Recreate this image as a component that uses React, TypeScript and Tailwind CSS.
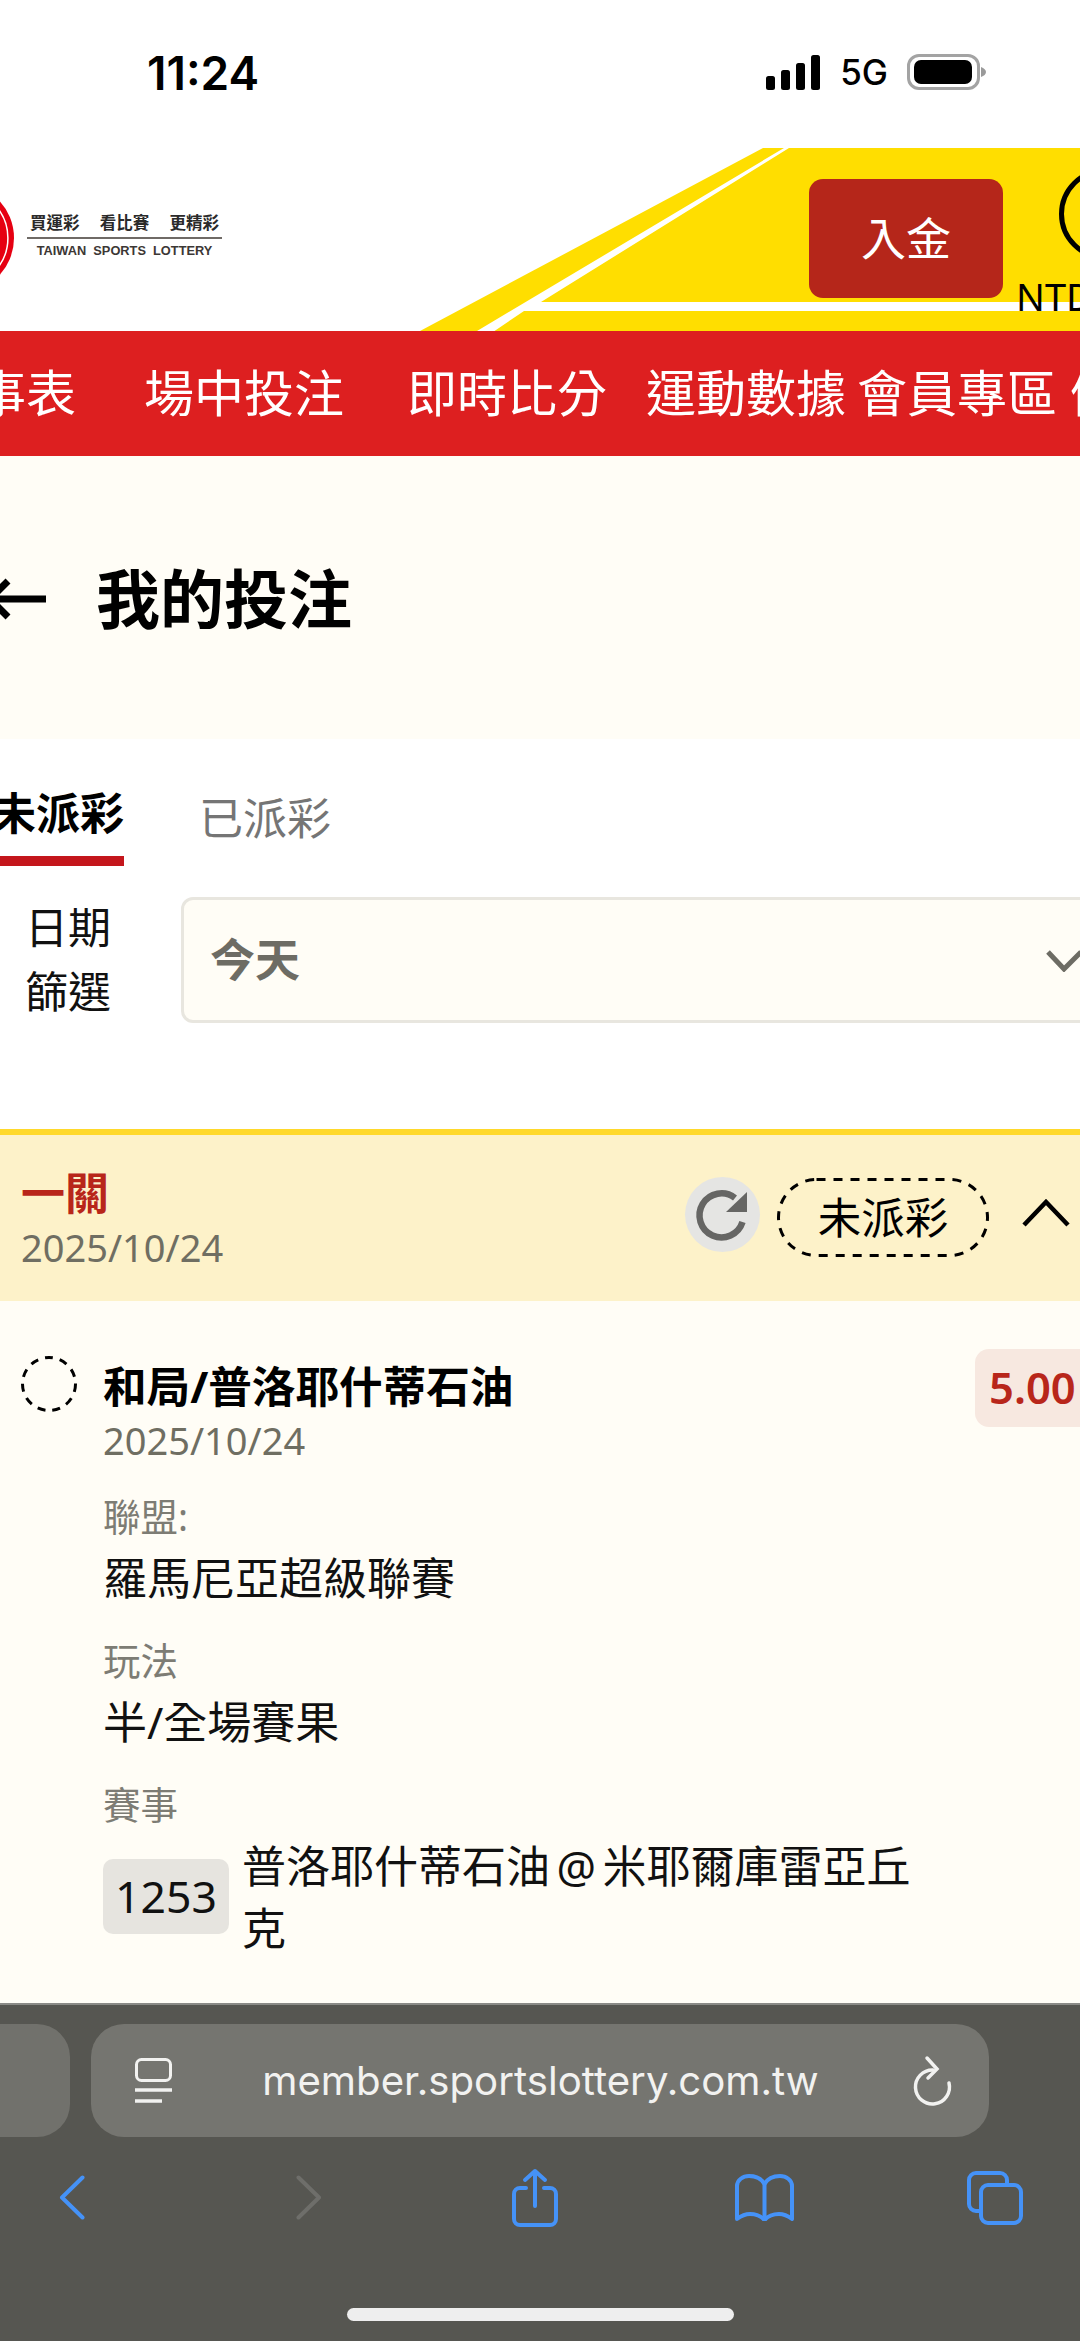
const cjk = "font-['Noto_Sans','Noto_Sans_CJK_TC',sans-serif]"

function SignalBars() {
  return (
    <svg width="54" height="35" viewBox="0 0 54 35" fill="#000">
      <rect x="0" y="21" width="9" height="14" rx="2.5" />
      <rect x="15" y="15" width="9" height="20" rx="2.5" />
      <rect x="30" y="8" width="9" height="27" rx="2.5" />
      <rect x="45" y="0" width="9" height="35" rx="2.5" />
    </svg>
  )
}

function Battery() {
  return (
    <svg width="79" height="36" viewBox="0 0 79 36">
      <rect x="1.5" y="1.5" width="70" height="33" rx="10.5" fill="none" stroke="#a3a3a3" strokeWidth="3" />
      <rect x="7" y="6" width="58" height="24" rx="7" fill="#000" />
      <path d="M74 13c3 1 5 3 5 5s-2 4-5 5z" fill="#9a9a9a" />
    </svg>
  )
}

function StatusBar() {
  return (
    <div className="h-[148px] bg-white flex items-start justify-between pl-[147px] pr-[94px] pt-[49px]">
      <span className="font-['Inter',sans-serif] text-[46px] leading-[48px] font-semibold text-black">11:24</span>
      <div className="flex items-center pt-[5px]">
        <SignalBars />
        <span className="font-['Inter',sans-serif] text-[35px] leading-[36px] font-medium text-black ml-[20px] mr-[19px]">5G</span>
        <Battery />
      </div>
    </div>
  )
}

function Banner() {
  return (
    <svg className="absolute inset-0" width="1080" height="183" viewBox="0 0 1080 183">
      <polygon points="420,183 763,0 1080,0 1080,183" fill="#ffde00" />
      <polygon points="477,183 784,0 789,0 541,154 1080,154 1080,163 524,163 494.5,183" fill="#fff" />
    </svg>
  )
}

function Logo() {
  return (
    <div className="flex items-center w-[222px] shrink-0">
      <svg width="14" height="80" viewBox="0 0 14 80" className="shrink-0">
        <circle cx="-40.6" cy="40" r="54.6" fill="#e60012" />
        <circle cx="-40.6" cy="40" r="48.5" fill="none" stroke="#fff" strokeWidth="1.5" />
      </svg>
      <div className="ml-[13px] w-[195px] flex flex-col items-center -mt-[4px]">
        <div className={`${cjk} text-[16.5px] leading-[20px] font-bold text-[#2a2a2a] w-full flex justify-between px-[3px]`}>
          <span>買運彩</span>
          <span>看比賽</span>
          <span>更精彩</span>
        </div>
        <div className="w-full h-[1.5px] bg-[#6f6a66] mt-[4px]" />
        <div className="font-['Liberation_Sans',sans-serif] text-[12.8px] leading-[16px] font-bold text-[#3c3735] whitespace-pre mt-[4px]">TAIWAN  SPORTS  LOTTERY</div>
      </div>
    </div>
  )
}

function Header() {
  return (
    <div className="relative h-[183px] bg-white overflow-hidden flex items-center pb-[3px]">
      <Banner />
      <div className="relative">
        <Logo />
      </div>
      <div className="relative ml-[587px] flex items-start self-start pt-[31px] shrink-0">
        <button className={`${cjk} w-[194px] h-[119px] bg-[#b5261a] rounded-[14px] text-white text-[45px] shrink-0`}>入金</button>
        <div className="ml-[13px] flex flex-col items-start -mt-[11px]">
          <div className="ml-[43px] w-[92px] h-[92px] rounded-full border-[5px] border-black" />
          <span className="font-['Noto_Sans',sans-serif] text-[38px] leading-[40px] text-black mt-[16px]">NTD</span>
        </div>
      </div>
    </div>
  )
}

function NavBar() {
  return (
    <div className={`${cjk} h-[125px] bg-[#dd1f20] flex items-center text-white text-[50px] whitespace-nowrap overflow-hidden`}>
      <div className="flex items-center -ml-[74px] shrink-0">
        <span>賽事表</span>
        <span className="ml-[68px]">場中投注</span>
        <span className="ml-[63px]">即時比分</span>
        <span className="ml-[39px]">運動數據</span>
        <span className="ml-[11px]">會員專區</span>
        <span className="ml-[13px]">優惠</span>
      </div>
    </div>
  )
}

function TitleRow() {
  return (
    <div className="h-[283px] bg-[#fffdf6] flex items-center pt-[3px]">
      <svg width="46" height="44" viewBox="0 0 46 44" className="shrink-0" fill="none" stroke="#000" strokeWidth="7">
        <path d="M0 22h46" />
        <path d="M8 4L-10 22L8 40" />
      </svg>
      <h1 className={`${cjk} ml-[50px] text-[64px] font-bold text-black`}>我的投注</h1>
    </div>
  )
}

function Tabs() {
  return (
    <div className={`${cjk} flex items-end h-[127px] overflow-hidden text-[44px]`}>
      <div className="w-[124px] h-[127px] flex flex-col justify-end shrink-0">
        <span className="flex justify-end whitespace-nowrap font-bold text-black leading-[60px] mb-[13px]">未派彩</span>
        <div className="h-[10px] bg-[#c4161c]" />
      </div>
      <span className="ml-[75px] mb-[18px] text-[#757575] leading-[60px]">已派彩</span>
    </div>
  )
}

function DateFilter() {
  return (
    <div className="flex items-center h-[126px] mt-[31px]">
      <div className={`${cjk} w-[181px] pl-[25px] text-[43px] leading-[64px] text-[#111] shrink-0`}>
        日期<br />篩選
      </div>
      <div className="flex-1 h-[126px] -mr-[40px] rounded-[12px] border-[3px] border-[#e8e6df] bg-[#fffdf6] flex items-center pl-[26px] pr-[35px] justify-between">
        <span className={`${cjk} text-[45px] font-bold text-[#6d6c64]`}>今天</span>
        <svg width="36" height="22" viewBox="0 0 36 22" fill="none" stroke="#6d6c64" strokeWidth="5" className="mt-[2px]">
          <path d="M2 2l16 17L35 2" />
        </svg>
      </div>
    </div>
  )
}

function StatusPill() {
  return (
    <div className={`${cjk} relative ml-[17px] w-[212px] h-[79px] flex items-center justify-center text-[43.5px] text-black`}>
      <svg className="absolute inset-0" width="212" height="79" viewBox="0 0 212 79" fill="none" stroke="#000" strokeWidth="3" strokeDasharray="9 8">
        <rect x="1.5" y="1.5" width="209" height="76" rx="38" />
      </svg>
      <span className="relative">未派彩</span>
    </div>
  )
}

function CardHeader() {
  return (
    <div className="h-[172px] bg-[#fdf2c9] border-t-[6px] border-[#ffd92b] flex items-center justify-between pl-[21px]">
      <div className="flex flex-col mt-[4px]">
        <span className={`${cjk} text-[44px] leading-[52px] font-bold text-[#b8261a]`}>一關</span>
        <span className={`${cjk} text-[38px] leading-[50px] text-[#6f6e62] mt-[3px]`}>2025/10/24</span>
      </div>
      <div className="flex items-center pr-[10px]">
        <div className="w-[75px] h-[75px] rounded-full bg-[#e5e5e3] mb-[6px] shrink-0">
          <svg width="75" height="75" viewBox="0 0 75 75" fill="none">
            <path d="M57.5 45A22 22 0 1 1 50 21" stroke="#666664" strokeWidth="6.5" />
            <path d="M62 15v20H41z" fill="#666664" />
          </svg>
        </div>
        <StatusPill />
        <svg width="48" height="28" viewBox="0 0 48 28" fill="none" stroke="#000" strokeWidth="4.5" className="ml-[33px] mb-[9px]">
          <path d="M2 26L24 3l22 23" />
        </svg>
      </div>
    </div>
  )
}

function Field({ label, value }: { label: string; value: string }) {
  return (
    <div className="flex flex-col">
      <span className={`${cjk} text-[37.5px] leading-[50px] text-[#7d7c74]`}>{label}</span>
      <span className={`${cjk} text-[44px] leading-[60px] text-[#111] mt-[6px]`}>{value}</span>
    </div>
  )
}

function BetItem() {
  return (
    <div className="h-[703px] bg-[#fffdf6] flex items-start pl-[21px] pt-[54px] relative overflow-hidden">
      <svg width="56" height="58" viewBox="0 0 56 58" fill="none" stroke="#000" strokeWidth="3" strokeDasharray="8 7" className="shrink-0">
        <circle cx="28" cy="29" r="26.5" />
      </svg>
      <div className="ml-[26px] flex-1 flex flex-col">
        <span className={`${cjk} text-[43.6px] leading-[52px] font-bold text-black mt-[5px]`}>和局/普洛耶什蒂石油</span>
        <span className={`${cjk} text-[38px] leading-[50px] text-[#6f6e62] mt-[3px] mb-[27px]`}>2025/10/24</span>
        <div className="flex flex-col gap-[28px]">
          <Field label="聯盟:" value="羅馬尼亞超級聯賽" />
          <Field label="玩法" value="半/全場賽果" />
          <div className="flex flex-col">
            <span className={`${cjk} text-[37.5px] leading-[50px] text-[#7d7c74]`}>賽事</span>
            <div className="flex items-center mt-[5px]">
              <span className={`${cjk} w-[126px] h-[75px] bg-[#e6e4df] rounded-[10px] flex items-center justify-center text-[44.5px] text-[#111] shrink-0`}>1253</span>
              <span className={`${cjk} ml-[13px] w-[680px] text-[44px] leading-[62px] text-[#111] [word-spacing:-5px]`}>普洛耶什蒂石油 @ 米耶爾庫雷亞丘克</span>
            </div>
          </div>
        </div>
      </div>
      <div className="absolute left-[975px] top-[48px] w-[130px] h-[78px] rounded-[14px] bg-[#f7e8e0] flex items-center pl-[14px]">
        <span className={`${cjk} text-[43.5px] font-semibold text-[#b8261a]`}>5.00</span>
      </div>
    </div>
  )
}

function SafariBar() {
  return (
    <div className="h-[338px] bg-[#565651] border-t-[2px] border-[#8a8a86] flex flex-col">
      <div className="flex items-center gap-[21px] -ml-[60px] pt-[19px]">
        <div className="w-[130px] h-[113px] bg-[#71716c] rounded-[33px] shrink-0" />
        <div className="w-[898px] h-[113px] bg-[#757570] rounded-[33px] flex items-center pl-[44px] pr-[36px] shrink-0">
          <svg width="37" height="46" viewBox="0 0 37 46" fill="none" stroke="#f2f2f0" strokeWidth="3">
            <rect x="1.5" y="1.5" width="34" height="21" rx="5" />
            <path d="M0 32h37" strokeWidth="3.5" />
            <path d="M0 43h27" strokeWidth="3.5" />
          </svg>
          <span className="flex-1 text-center font-['Inter',sans-serif] text-[40.2px] text-[#f2f2f0] whitespace-nowrap -ml-[4px]">member.sportslottery.com.tw</span>
          <svg width="40" height="52" viewBox="0 0 40 52" fill="none" stroke="#f2f2f0" strokeWidth="3.5" strokeLinecap="round">
            <path d="M36 28A17 17 0 1 1 20 15" />
            <path d="M14 3l10 11-9 9" />
          </svg>
        </div>
      </div>
      <div className="flex items-center pl-[59px] mt-[31px]">
        <svg width="26" height="45" viewBox="0 0 26 45" fill="none" stroke="#4592f7" strokeWidth="4" strokeLinecap="round" strokeLinejoin="round" className="shrink-0">
          <path d="M23.5 2.5L3 22.5l20.5 20" />
        </svg>
        <svg width="26" height="45" viewBox="0 0 26 45" fill="none" stroke="#6e6e6a" strokeWidth="4" strokeLinecap="round" strokeLinejoin="round" className="ml-[211px] shrink-0">
          <path d="M2.5 2.5L23 22.5l-20.5 20" />
        </svg>
        <svg width="46" height="59" viewBox="0 0 46 59" fill="none" stroke="#4592f7" strokeWidth="4" strokeLinecap="round" strokeLinejoin="round" className="ml-[190px] shrink-0">
          <path d="M23 38V3M13 12l10-9 10 9" />
          <path d="M14 20H8a6 6 0 0 0-6 6v25a6 6 0 0 0 6 6h30a6 6 0 0 0 6-6V26a6 6 0 0 0-6-6h-6" />
        </svg>
        <svg width="59" height="47" viewBox="0 0 59 47" fill="none" stroke="#4592f7" strokeWidth="4" strokeLinecap="round" strokeLinejoin="round" className="ml-[177px] shrink-0">
          <path d="M29.500 10C26 4 20 2 14 2 8 2 2 6 2 12v33c4-3 8-5 13-5 6 0 11 2 14.500 6 3.500-4 8.500-6 14.500-6 5 0 9 2 13 5V12c0-6-6-10-12-10-6 0-12 2-15.500 8z" />
          <path d="M29.500 10v36" />
        </svg>
        <svg width="56" height="54" viewBox="0 0 56 54" fill="none" stroke="#4592f7" strokeWidth="4" className="ml-[173px] shrink-0">
          <path d="M12 40H9a7 7 0 0 1-7-7V9a7 7 0 0 1 7-7h24a7 7 0 0 1 7 7v4" />
          <rect x="14" y="14" width="40" height="38" rx="7" />
        </svg>
      </div>
      <div className="mt-auto mb-[20px] mx-auto w-[387px] h-[13px] rounded-full bg-[#eeeeee]" />
    </div>
  )
}

export default function App() {
  return (
    <div className="w-[1080px] h-[2341px] overflow-hidden bg-white flex flex-col">
      <StatusBar />
      <Header />
      <NavBar />
      <TitleRow />
      <Tabs />
      <DateFilter />
      <div className="h-[106px] shrink-0" />
      <CardHeader />
      <BetItem />
      <SafariBar />
    </div>
  )
}
